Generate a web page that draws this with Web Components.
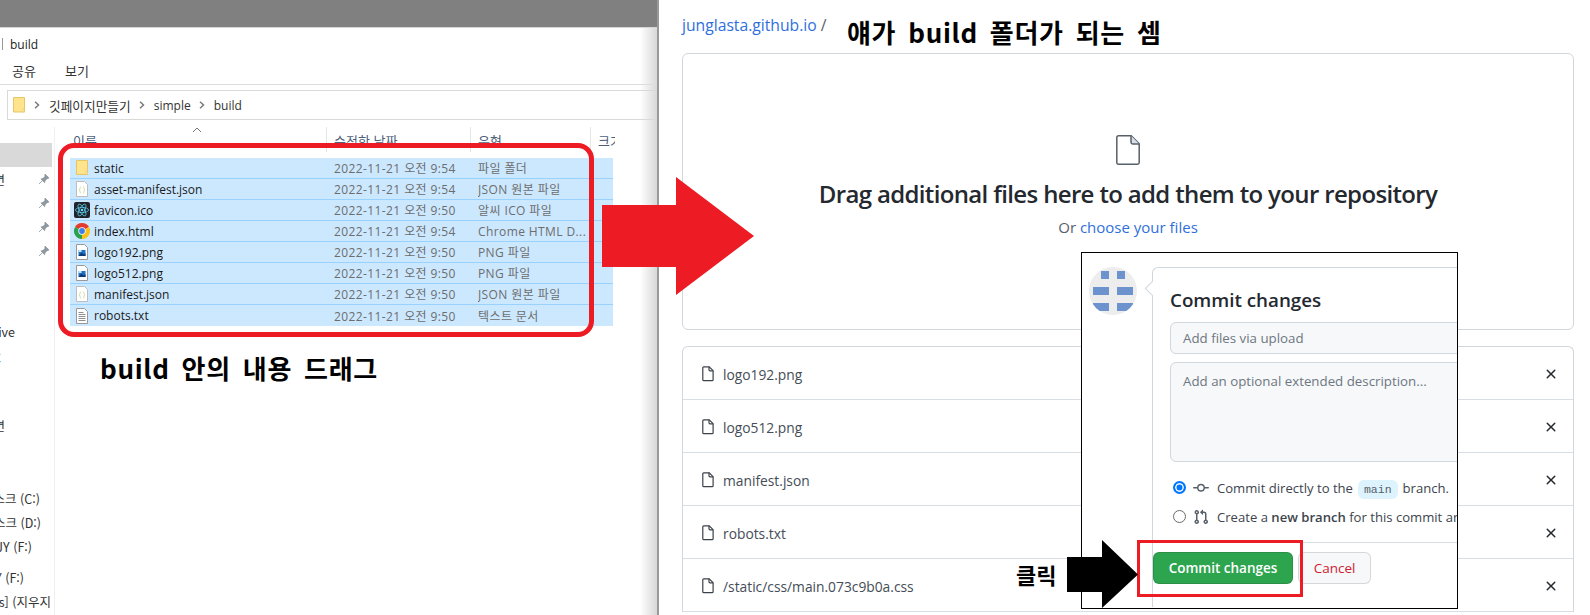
<!DOCTYPE html>
<html lang="ko">
<head>
<meta charset="utf-8">
<title>build</title>
<style>
  html, body { margin: 0; height: 100%; background: #fff; overflow: hidden; }
  body { width: 1590px; height: 615px; position: relative; font-family: "Noto Sans", "Noto Sans CJK KR", sans-serif; }
  tutorial-shot { width: 1590px; height: 615px; }
</style>
</head>
<body>
<tutorial-shot></tutorial-shot>

<script>
const KO_UI = '"Noto Sans CJK KR", "Noto Sans", sans-serif';
const LATIN_UI = '"Open Sans", "Noto Sans CJK KR", sans-serif';

// FILE ICONS
const icons = {
  folder: `<svg width="16" height="16" viewBox="0 0 16 16"><path d="M2.500 .5h11v14h-11z" fill="#ffe38d" stroke="#e8c566"/><path d="M12 11.500h1.500v3H12z" fill="#fff3c4" stroke="#e8c566" stroke-width=".7"/></svg>`,
  json: `<svg width="16" height="16" viewBox="0 0 16 16"><path d="M2.500 .5h8l3 3v12h-11z" fill="#fff" stroke="#bdbdbd"/><path d="M7 6c-1 0-1 .5-1 1.500S5.500 9 5 9c.5 0 1 .5 1 1.500S6 12 7 12M9 6c1 0 1 .5 1 1.500s.5 1.500 1 1.500c-.5 0-1 .5-1 1.500s0 1.500-1 1.500" fill="none" stroke="#c3cf8e" stroke-width=".8"/></svg>`,
  react: `<svg width="16" height="16" viewBox="0 0 16 16"><rect width="16" height="16" rx="2" fill="#20232a"/><g fill="none" stroke="#61dafb" stroke-width=".7"><ellipse cx="8" cy="8" rx="6.600" ry="2.600"/><ellipse cx="8" cy="8" rx="6.600" ry="2.600" transform="rotate(60 8 8)"/><ellipse cx="8" cy="8" rx="6.600" ry="2.600" transform="rotate(120 8 8)"/></g><circle cx="8" cy="8" r="1.300" fill="#61dafb"/></svg>`,
  chrome: `<svg width="16" height="16" viewBox="0 0 16 16"><path d="M8 8 1.070 4A8 8 0 0 1 14.930 4z" fill="#e33b2e"/><path d="M8 8 14.930 4A8 8 0 0 1 8 16z" fill="#fbc116"/><path d="M8 8 8 16A8 8 0 0 1 1.070 4z" fill="#2ba14b"/><circle cx="8" cy="8" r="3.700" fill="#fff"/><circle cx="8" cy="8" r="2.900" fill="#3f7de8"/></svg>`,
  image: `<svg width="16" height="16" viewBox="0 0 16 16"><path d="M2.500 .5h8l3 3v12h-11z" fill="#fff" stroke="#999"/><rect x="4.500" y="6" width="7" height="6" fill="#1f6fc0"/><path d="M4.500 12 7.500 8.500 9.500 10.500 11.500 9v3z" fill="#0c3a78"/><rect x="4.500" y="6" width="3" height="2" fill="#bfe4fa"/></svg>`,
  text: `<svg width="16" height="16" viewBox="0 0 16 16"><path d="M2.500 .5h8l3 3v12h-11z" fill="#fff" stroke="#999"/><path d="M4.500 4.500h5M4.500 6.500h7M4.500 8.500h7M4.500 10.500h7M4.500 12.500h7" stroke="#8f8f8f"/></svg>`
};

// GITHUB ICONS
const octicons = {
  file: `<svg width="16" height="16" viewBox="0 0 16 16" fill="none" stroke="#3c4249" stroke-width="1.200"><path d="M3.800 .8h5.400l3.900 3.900v9c0 .6-.4 1-1 1H3.800c-.6 0-1-.4-1-1V1.800c0-.6.4-1 1-1z"/><path d="M9 .8v3c0 .6.400 1 1 1h3.100"/></svg>`,
  bigfile: `<svg width="24" height="30" viewBox="0 0 24 30" fill="none" stroke="#57606a" stroke-width="1.500"><path d="M2.500 .8h12.700l8 8v18.700c0 1-.7 1.700-1.700 1.700H2.500c-1 0-1.700-.7-1.700-1.700V2.500c0-1 .7-1.700 1.700-1.700z"/><path d="M15 .8v6.500c0 1 .7 1.700 1.700 1.700h6.500" fill="#d8dee4"/></svg>`,
  close: `<svg width="16" height="16" viewBox="0 0 16 16" fill="#24292f"><path d="M3.720 3.720a.75.75 0 0 1 1.060 0L8 6.940l3.220-3.220a.75.75 0 1 1 1.060 1.060L9.060 8l3.220 3.220a.75.75 0 1 1-1.060 1.060L8 9.060l-3.220 3.220a.75.75 0 0 1-1.060-1.060L6.940 8 3.720 4.780a.75.75 0 0 1 0-1.060z"/></svg>`,
  commit: `<svg width="16" height="16" viewBox="0 0 16 16" fill="#57606a"><path fill-rule="evenodd" d="M10.500 7.750a2.500 2.500 0 1 1-5 0 2.500 2.500 0 0 1 5 0zm1.430.75a4.002 4.002 0 0 1-7.860 0H.75a.75.75 0 1 1 0-1.500h3.320a4.001 4.001 0 0 1 7.860 0h3.320a.75.75 0 1 1 0 1.500h-3.320z"/></svg>`,
  pr: `<svg width="16" height="16" viewBox="0 0 16 16" fill="#57606a"><path fill-rule="evenodd" d="M7.177 3.073 9.573.677A.25.25 0 0 1 10 .854v4.792a.25.25 0 0 1-.427.177L7.177 3.427a.25.25 0 0 1 0-.354zM3.750 2.500a.75.75 0 1 0 0 1.500.75.75 0 0 0 0-1.500zm-2.250.75a2.250 2.250 0 1 1 3 2.122v5.256a2.251 2.251 0 1 1-1.500 0V5.372A2.250 2.250 0 0 1 1.500 3.250zM11 2.500h-1V4h1a1 1 0 0 1 1 1v5.628a2.251 2.251 0 1 0 1.500 0V5A2.500 2.500 0 0 0 11 2.500zm1 10.250a.75.75 0 1 1 1.500 0 .75.75 0 0 1-1.500 0zM3.750 12a.75.75 0 1 0 0 1.500.75.75 0 0 0 0-1.500z"/></svg>`
};

const chevron = `<svg class="sep" width="6" height="8" viewBox="0 0 6 8"><path d="M1 .8 4.500 4 1 7.200" fill="none" stroke="#7b7b7b" stroke-width="1.500"/></svg>`;

class NavRow extends HTMLElement {
  connectedCallback() {
    if (!this.shadowRoot) {
      this.attachShadow({ mode: 'open' });
      this.shadowRoot.innerHTML = `
        <style>
          :host { display: flex; justify-content: flex-end; align-items: center; height: 24px; overflow: hidden;
                  font: 12.500px ${KO_UI}; color: #333; white-space: nowrap; position: relative; }
          .pin { position: absolute; left: 38px; top: 6px; }
        </style>
        <slot></slot>
        ${this.hasAttribute('pin') ? `<svg class="pin" width="12" height="12" viewBox="0 0 12 12"><path d="M7 1l4 4-2 .7-2 2-.4 2L2.900 6l2-.4 2-2zM4 8l-3 3" fill="#8d97a0" stroke="#8d97a0" stroke-width=".8"/></svg>` : ''}`;
    }
    this.style.paddingRight = (this.getAttribute('end') || 0) + 'px';
    if (this.hasAttribute('top')) this.style.marginTop = this.getAttribute('top') + 'px';
  }
}

class FileRow extends HTMLElement {
  connectedCallback() {
    if (this.shadowRoot) return;
    this.attachShadow({ mode: 'open' });
    this.shadowRoot.innerHTML = `
      <style>
        :host { display: grid; grid-template-columns: 264px 144px 1fr; height: 21px; box-sizing: border-box; align-items: center;
                background: #cce8ff; border-bottom: 1px solid #99d1ff; font: 12px ${LATIN_UI}; color: #1a1a1a; white-space: nowrap; }
        :host(:last-child) { border-bottom: 0; }
        .name { display: flex; align-items: center; gap: 4px; padding-left: 4px; }
        .name svg { flex: none; }
        .cell { color: #6d6d6d; overflow: hidden; letter-spacing: .4px; }
      </style>
      <div class="name">${icons[this.getAttribute('icon')]}<span>${this.getAttribute('name')}</span></div>
      <div class="cell">${this.getAttribute('date')}</div>
      <div class="cell">${this.getAttribute('type')}</div>`;
  }
}

class ExplorerPane extends HTMLElement {
  connectedCallback() {
    if (this.shadowRoot) return;
    this.attachShadow({ mode: 'open' });
    const rows = [
      ['folder', 'static', '2022-11-21 오전 9:54', '파일 폴더'],
      ['json', 'asset-manifest.json', '2022-11-21 오전 9:54', 'JSON 원본 파일'],
      ['react', 'favicon.ico', '2022-11-21 오전 9:50', '알씨 ICO 파일'],
      ['chrome', 'index.html', '2022-11-21 오전 9:54', 'Chrome HTML D...'],
      ['image', 'logo192.png', '2022-11-21 오전 9:50', 'PNG 파일'],
      ['image', 'logo512.png', '2022-11-21 오전 9:50', 'PNG 파일'],
      ['json', 'manifest.json', '2022-11-21 오전 9:50', 'JSON 원본 파일'],
      ['text', 'robots.txt', '2022-11-21 오전 9:50', '텍스트 문서']
    ].map(r => `<file-row icon="${r[0]}" name="${r[1]}" date="${r[2]}" type="${r[3]}"></file-row>`).join('');

    this.shadowRoot.innerHTML = `
      <style>
        :host { display: flex; flex-direction: column; width: 659px; height: 615px; box-sizing: border-box; overflow: hidden; flex: none;
                border-right: 2px solid #9a9a9a; background: linear-gradient(to right, #fff 640px, #d8d8d8 657px);
                font: 13px ${KO_UI}; color: #333; }
        .top { height: 28px; background: #808080; border-bottom: 1px solid #d6d6d6; box-sizing: border-box; flex: none; margin-right: -2px; }
        .title { height: 28px; flex: none; box-sizing: border-box; display: flex; align-items: center; padding: 4px 0 0 2px; gap: 7px; color: #222; font: 12px ${LATIN_UI}; }
        .title i { width: 1px; height: 12px; background: #999; }
        .menu { height: 29px; flex: none; box-sizing: border-box; display: flex; align-items: center; gap: 29px; padding-left: 12px; border-bottom: 1px solid #dcdcdc; }
        .crumbs { height: 30px; flex: none; box-sizing: border-box; margin: 5px 0 0 7px; border: 1px solid #d9d9d9; border-right: 0;
                  display: flex; align-items: center; padding-left: 4px; color: #333; font: 12px ${LATIN_UI}; }
        .crumbs svg { flex: none; }
        .crumbs .sep { margin: 0 9px 0 6px; }
        .crumbs span + .sep { margin-left: 8px; }
        .crumbs .ko { font: 12.700px ${KO_UI}; }
        .body { display: flex; flex: 1; min-height: 0; margin-top: 7px; }
        .nav { width: 55px; flex: none; box-sizing: border-box; border-right: 1px solid #f0f0f0; overflow: hidden; padding-top: 16px; }
        .nav .sel { height: 24px; width: 52px; background: #d9d9d9; }
        .main { flex: 1; min-width: 0; padding-right: 44px; }
        .head { height: 31px; display: grid; grid-template-columns: 272px 144px 120px 24px; box-sizing: border-box; position: relative; color: #4c607a; }
        .head div { border-right: 1px solid #e5e5e5; height: 25px; padding: 4px 0 0 18px; box-sizing: border-box; }
        .head div + div { padding-left: 7px; }
        .head .size { border: 0; overflow: hidden; white-space: nowrap; }
        .head svg { position: absolute; left: 137px; top: 0; }
        .list { margin-left: 15px; }
      </style>
      <div class="top"></div>
      <div class="title"><i></i><span>build</span></div>
      <div class="menu"><span>공유</span><span>보기</span></div>
      <div class="crumbs">
        <svg width="16" height="16" viewBox="0 0 16 16"><path d="M1.500 .5h11v14.500h-11z" fill="#ffe38d" stroke="#e8c566"/><path d="M11 12h1.500v3H11z" fill="#fff3c4" stroke="#e8c566" stroke-width=".7"/></svg>
        ${chevron}<span class="ko">깃페이지만들기</span>
        ${chevron}<span>simple</span>
        ${chevron}<span>build</span>
      </div>
      <div class="body">
        <div class="nav">
          <div class="sel"></div>
          <nav-row end="49" pin>바탕 화면</nav-row>
          <nav-row end="54" pin>다운로드</nav-row>
          <nav-row end="54" pin>문서</nav-row>
          <nav-row end="54" pin>사진</nav-row>
          <nav-row end="39" top="56">OneDrive</nav-row>
          <nav-row end="53" top="2">내 PC</nav-row>
          <nav-row end="49" top="44">바탕 화면</nav-row>
          <nav-row end="14" top="49">로컬 디스크 (C:)</nav-row>
          <nav-row end="13">로컬 디스크 (D:)</nav-row>
          <nav-row end="22">JUNGJY (F:)</nav-row>
          <nav-row end="30" top="7">JUNGJY (F:)</nav-row>
          <nav-row end="3">[js] (지우지</nav-row>
        </div>
        <div class="main">
          <div class="head">
            <div>이름</div><div>수정한 날짜</div><div>유형</div><div class="size">크기</div>
            <svg width="10" height="6" viewBox="0 0 10 6"><path d="M1 5l4-4 4 4" fill="none" stroke="#777"/></svg>
          </div>
          <div class="list">${rows}</div>
        </div>
      </div>`;
  }
}

class UploadRow extends HTMLElement {
  connectedCallback() {
    if (this.shadowRoot) return;
    this.attachShadow({ mode: 'open' });
    this.shadowRoot.innerHTML = `
      <style>
        :host { display: flex; align-items: center; height: 53px; box-sizing: border-box; padding: 2px 14px 0 17px; gap: 7px;
                border-bottom: 1px solid #d8dee4; font: 13.800px ${LATIN_UI}; color: #444d56; flex: none; }
        span { flex: 1; }
      </style>
      ${octicons.file}<span><slot></slot></span>${octicons.close}`;
  }
}

class UploadPane extends HTMLElement {
  connectedCallback() {
    if (this.shadowRoot) return;
    this.attachShadow({ mode: 'open' });
    this.shadowRoot.innerHTML = `
      <style>
        :host { display: block; flex: 1; padding: 0 16px 0 23px; font: 14px ${LATIN_UI}; color: #24292f; overflow: hidden; }
        .crumb { height: 53px; box-sizing: border-box; padding-top: 14px; font-size: 15.700px; color: #57606a; }
        .crumb a { color: #2f6fdc; }
        .drop { height: 277px; box-sizing: border-box; border: 1px solid #d0d7de; border-radius: 6px; display: flex; flex-direction: column; align-items: center; padding-top: 81px; }
        h2 { margin: 11px 0 0; font-size: 24px; font-weight: 600; line-height: 36px; letter-spacing: -.65px; }
        p { margin: 5px 0 0; font-size: 15px; line-height: 20px; color: #57606a; }
        p a { color: #2f6fdc; }
        .list { margin-top: 16px; border: 1px solid #d0d7de; border-bottom: 0; border-radius: 6px 6px 0 0; display: flex; flex-direction: column; }
      </style>
      <div class="crumb"><a>junglasta.github.io</a> /</div>
      <div class="drop">
        ${octicons.bigfile}
        <h2>Drag additional files here to add them to your repository</h2>
        <p>Or <a>choose your files</a></p>
      </div>
      <div class="list">
        <upload-row>logo192.png</upload-row>
        <upload-row>logo512.png</upload-row>
        <upload-row>manifest.json</upload-row>
        <upload-row>robots.txt</upload-row>
        <upload-row>/static/css/main.073c9b0a.css</upload-row>
      </div>`;
  }
}

// pasted crop of the commit form, with the black frame
class CommitCard extends HTMLElement {
  connectedCallback() {
    if (this.shadowRoot) return;
    this.attachShadow({ mode: 'open' });
    this.shadowRoot.innerHTML = `
      <style>
        :host { position: absolute; left: 1081px; top: 252px; width: 377px; height: 357px; box-sizing: border-box; border: 1px solid #000; background: #fff;
                overflow: hidden; display: flex; gap: 15px; padding: 14px 0 0 7px; font: 13.300px ${LATIN_UI}; color: #24292f; }
        .avatar { width: 48px; height: 48px; flex: none; border-radius: 50%; background: #ededed; overflow: hidden; display: block; }
        .box { position: relative; flex: none; width: 420px; height: 340px; box-sizing: border-box; border: 1px solid #d0d7de; border-radius: 6px 0 0 0; border-right: 0; border-bottom: 0; padding: 17px 17px 0; }
        .box::before { content: ""; position: absolute; left: -6px; top: 15px; width: 10px; height: 10px; background: #fff; border-left: 1px solid #d0d7de; border-bottom: 1px solid #d0d7de; transform: rotate(45deg); }
        h3 { margin: 0; font-size: 18.800px; font-weight: 600; line-height: 30px; }
        .input { margin-top: 7px; height: 32px; box-sizing: border-box; border: 1px solid #d0d7de; border-radius: 6px; background: #f6f8fa; padding: 0 12px; display: flex; align-items: center; color: #6e7781; }
        .area { margin-top: 8px; height: 100px; align-items: flex-start; padding-top: 9px; }
        .opt { display: flex; align-items: center; height: 29px; white-space: nowrap; color: #3d444d; font-size: 13.100px; }
        .opts { margin-top: 11px; }
        .radio { width: 13px; height: 13px; box-sizing: border-box; border-radius: 50%; border: 1px solid #6b6b6b; margin: 0 7px 0 3px; flex: none; background: #fff; }
        .radio.on { border: 2px solid #0075ff; box-shadow: inset 0 0 0 1.500px #fff; background: #0075ff; }
        .opt svg { margin-right: 8px; flex: none; }
        code { font: 11.500px "Liberation Mono", monospace; background: #ddf4ff; border-radius: 6px; padding: 3px 6px; margin: 0 5px; color: #57606a; }
        b { font-weight: 600; }
        .actions { position: absolute; left: 0; right: 0; top: 274px; border-top: 1px solid #d8dee4; padding: 9px 0 0 0; display: flex; gap: 5px; }
        button { height: 32px; border-radius: 6px; border: 1px solid #1b1f2426; font: 600 13.500px ${LATIN_UI}; padding: 0; white-space: nowrap; }
        .ok { background: #2da44e; color: #fff; width: 140px; }
        .no { background: #f6f8fa; color: #cf222e; font-weight: 400; width: 73px; }
      </style>
      <svg class="avatar" viewBox="0 0 48 48"><g fill="#6d93cf"><rect x="12" y="4" width="8" height="8"/><rect x="28" y="4" width="8" height="8"/><rect x="4" y="20" width="16" height="8"/><rect x="28" y="20" width="16" height="8"/><rect x="4" y="36" width="16" height="8"/><rect x="28" y="36" width="16" height="8"/></g></svg>
      <div class="box">
        <h3>Commit changes</h3>
        <div class="input">Add files via upload</div>
        <div class="input area">Add an optional extended description...</div>
        <div class="opts">
          <div class="opt"><span class="radio on"></span>${octicons.commit}<span>Commit directly to the<code>main</code>branch.</span></div>
          <div class="opt"><span class="radio"></span>${octicons.pr}<span>Create a <b>new branch</b> for this commit and start a pull request.</span></div>
        </div>
        <div class="actions"><button class="ok">Commit changes</button><button class="no">Cancel</button></div>
      </div>`;
  }
}

// annotations drawn on top of the screenshot
class MarkUp extends HTMLElement {
  connectedCallback() {
    if (this.shadowRoot) return;
    this.attachShadow({ mode: 'open' });
    this.shadowRoot.innerHTML = `
      <style>
        :host { position: absolute; inset: 0; display: block; pointer-events: none; }
        .ring { position: absolute; left: 58px; top: 143px; width: 536px; height: 194px; box-sizing: border-box; border: 5px solid #ed1c24; border-radius: 16px; }
        .rect { position: absolute; left: 1137px; top: 540px; width: 166px; height: 57px; box-sizing: border-box; border: 3px solid #ed1c24; }
        .note { position: absolute; font: 700 26px ${KO_UI}; color: #000; white-space: nowrap; word-spacing: 4px; letter-spacing: .7px; line-height: 36px; }
        svg { position: absolute; left: 0; top: 0; }
      </style>
      <div class="ring"></div>
      <div class="rect"></div>
      <div class="note" style="left:100px;top:350px">build 안의 내용 드래그</div>
      <div class="note" style="left:847px;top:14px">얘가 build 폴더가 되는 셈</div>
      <div class="note" style="left:1016px;top:556px;font-size:22px;letter-spacing:0">클릭</div>
      <svg width="1590" height="615">
        <path d="M602 205h74V177l78 59-78 59v-28h-74z" fill="#ed1c24"/>
        <path d="M1067 557h35v-17l36 34.500-36 33.500v-16h-35z" fill="#000"/>
      </svg>`;
  }
}

class TutorialShot extends HTMLElement {
  connectedCallback() {
    if (this.shadowRoot) return;
    this.attachShadow({ mode: 'open' });
    this.shadowRoot.innerHTML = `
      <style>:host { display: flex; position: relative; overflow: hidden; }</style>
      <explorer-pane></explorer-pane>
      <upload-pane></upload-pane>
      <commit-card></commit-card>
      <mark-up></mark-up>`;
  }
}

customElements.define('nav-row', NavRow);
customElements.define('file-row', FileRow);
customElements.define('explorer-pane', ExplorerPane);
customElements.define('upload-row', UploadRow);
customElements.define('upload-pane', UploadPane);
customElements.define('commit-card', CommitCard);
customElements.define('mark-up', MarkUp);
customElements.define('tutorial-shot', TutorialShot);
</script>
</body>
</html>
